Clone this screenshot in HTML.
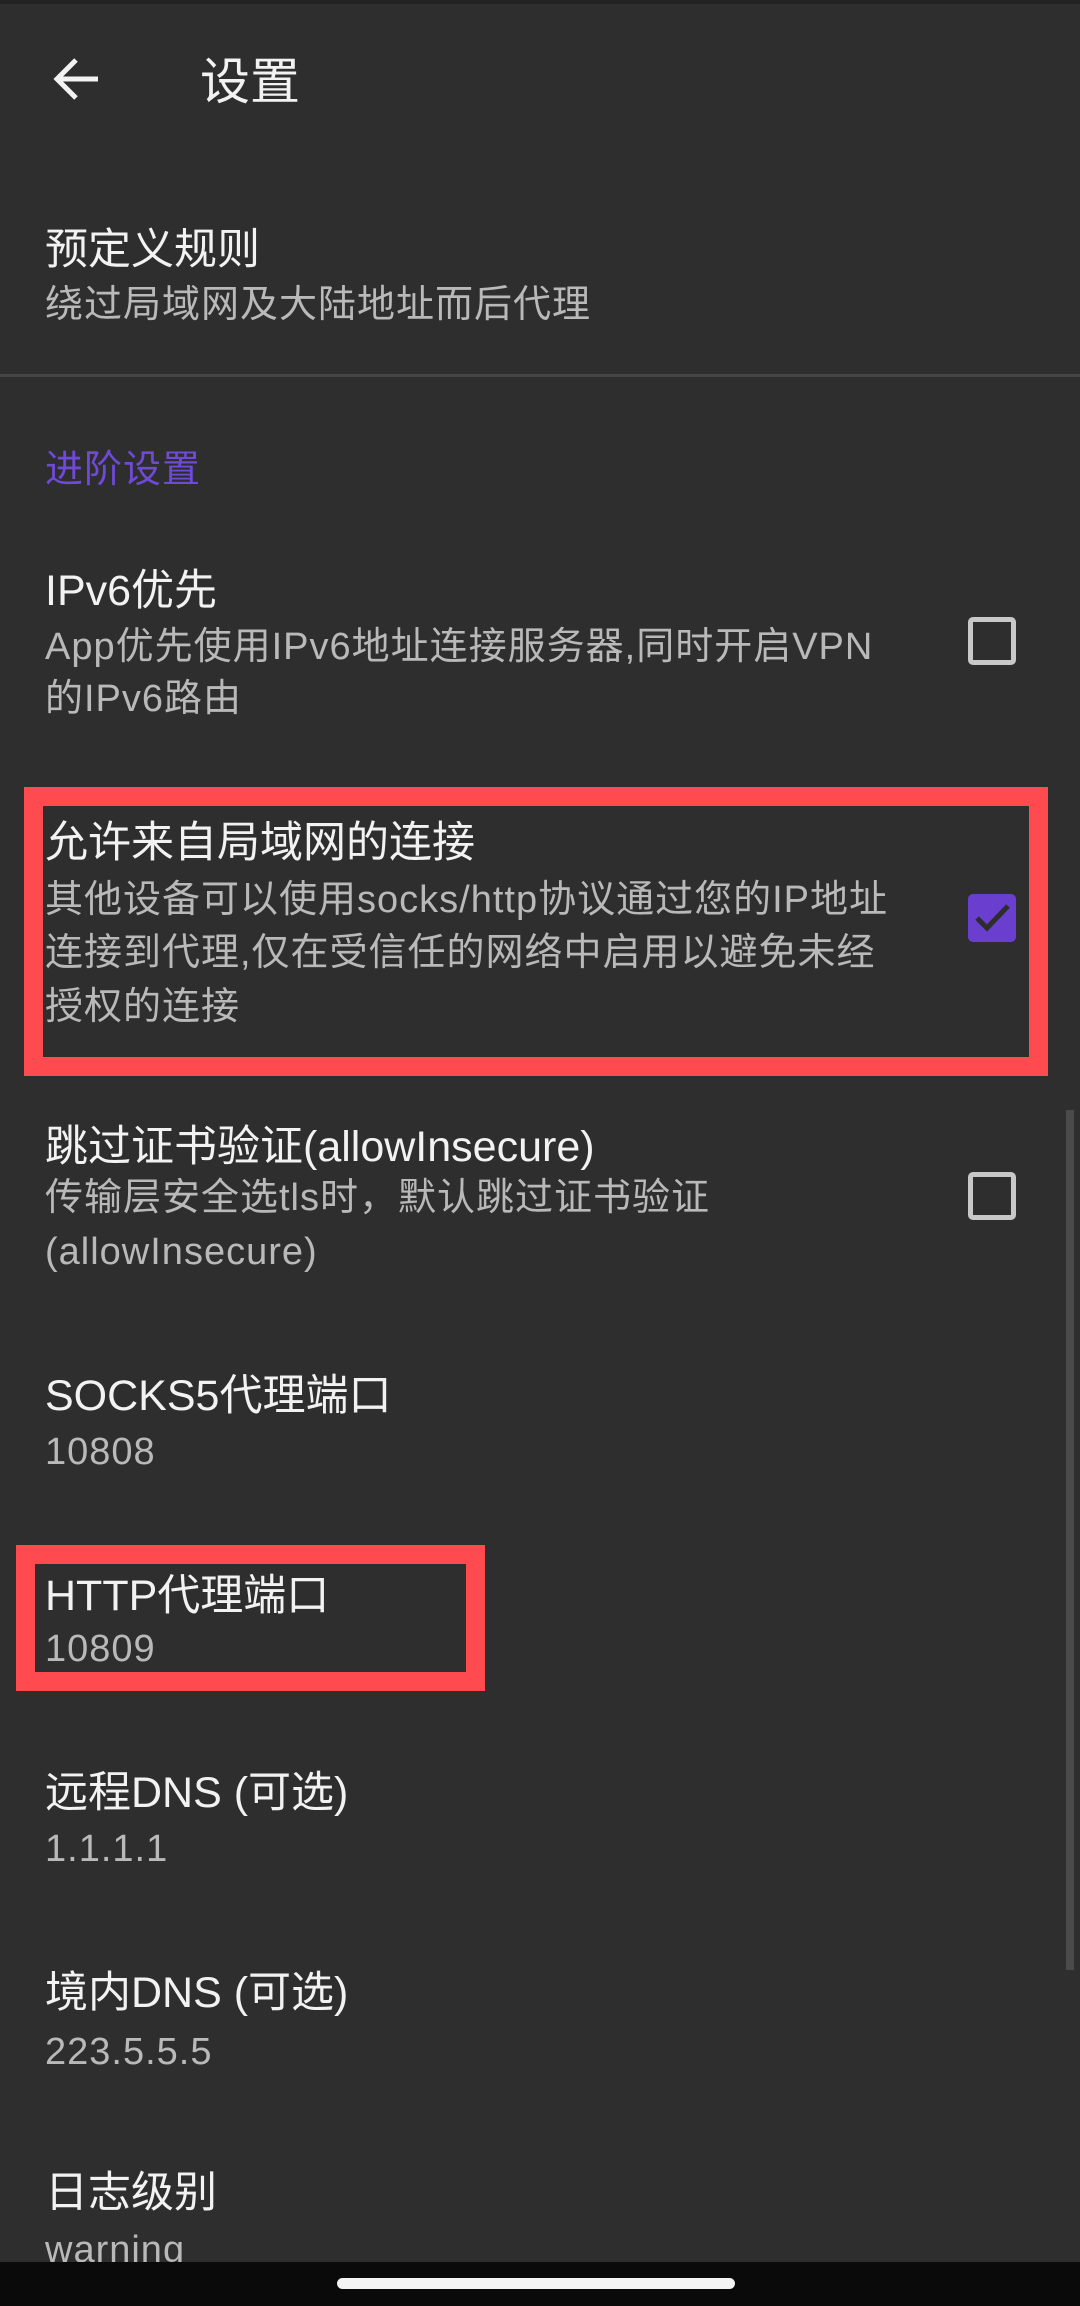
<!DOCTYPE html>
<html><head><meta charset="utf-8"><style>
html,body{margin:0;padding:0}
body{width:1080px;height:2306px;background:#2e2e2e;position:relative;overflow:hidden;font-family:"Liberation Sans","Noto Sans CJK SC",sans-serif}
.t{position:absolute;left:45px;color:#f2f2f2;font-size:43px;line-height:56px;white-space:nowrap}
.s{position:absolute;left:45px;color:#b9b9b9;font-size:38px;line-height:53px;white-space:nowrap;letter-spacing:1px}
.box{position:absolute;border:19px solid #ff4a4f;box-sizing:border-box}
.cb{position:absolute;left:968px;width:48px;height:48px;box-sizing:border-box;border:5px solid #c8c8c8;border-radius:5px}
</style></head><body>
<div style="position:absolute;left:0;top:0;width:1080px;height:4px;background:#222"></div>
<svg style="position:absolute;left:52px;top:56px" width="50" height="46" viewBox="0 0 50 46"><path d="M46 23H6M24 4L5 23l19 19" stroke="#f2f2f2" stroke-width="5" fill="none"/></svg>
<div class="t" style="left:200px;top:52px;font-size:50px;line-height:60px">设置</div>

<div class="t" style="top:222px">预定义规则</div>
<div class="s" style="top:279px">绕过局域网及大陆地址而后代理</div>
<div style="position:absolute;left:0;top:374px;width:1080px;height:3px;background:#454545"></div>
<div class="s" style="top:444px;color:#6e4ad6;font-size:38px">进阶设置</div>

<div class="t" style="top:563px">IPv6优先</div>
<div class="s" style="top:621px">App优先使用IPv6地址连接服务器,同时开启VPN</div>
<div class="s" style="top:673px">的IPv6路由</div>
<div class="cb" style="top:617px"></div>

<div class="box" style="left:24px;top:787px;width:1024px;height:289px"></div>
<div class="t" style="top:815px">允许来自局域网的连接</div>
<div class="s" style="top:874px">其他设备可以使用socks/http协议通过您的IP地址</div>
<div class="s" style="top:927px">连接到代理,仅在受信任的网络中启用以避免未经</div>
<div class="s" style="top:981px">授权的连接</div>
<div class="cb" style="top:894px;background:#6a3fcf;border-color:#6a3fcf"><svg width="48" height="48" viewBox="0 0 48 48" style="position:absolute;left:-5px;top:-5px"><path d="M9 24l10 10L40 12" stroke="#2d2d2d" stroke-width="5" fill="none"/></svg></div>

<div class="t" style="top:1119px">跳过证书验证(allowInsecure)</div>
<div class="s" style="top:1172px">传输层安全选tls时，默认跳过证书验证</div>
<div class="s" style="top:1226px">(allowInsecure)</div>
<div class="cb" style="top:1172px"></div>

<div style="position:absolute;left:1066px;top:1110px;width:8px;height:860px;background:#4a4a4a"></div>

<div class="t" style="top:1368px">SOCKS5代理端口</div>
<div class="s" style="top:1426px">10808</div>

<div class="box" style="left:16px;top:1545px;width:469px;height:146px"></div>
<div class="t" style="top:1568px">HTTP代理端口</div>
<div class="s" style="top:1623px">10809</div>

<div class="t" style="top:1765px">远程DNS (可选)</div>
<div class="s" style="top:1823px">1.1.1.1</div>

<div class="t" style="top:1965px">境内DNS (可选)</div>
<div class="s" style="top:2026px">223.5.5.5</div>

<div class="t" style="top:2165px">日志级别</div>
<div class="s" style="top:2224px">warning</div>

<div style="position:absolute;left:0;top:2262px;width:1080px;height:44px;background:#0a0a0a"></div>
<div style="position:absolute;left:337px;top:2278px;width:398px;height:11px;border-radius:6px;background:#f4f4f4"></div>
</body></html>
